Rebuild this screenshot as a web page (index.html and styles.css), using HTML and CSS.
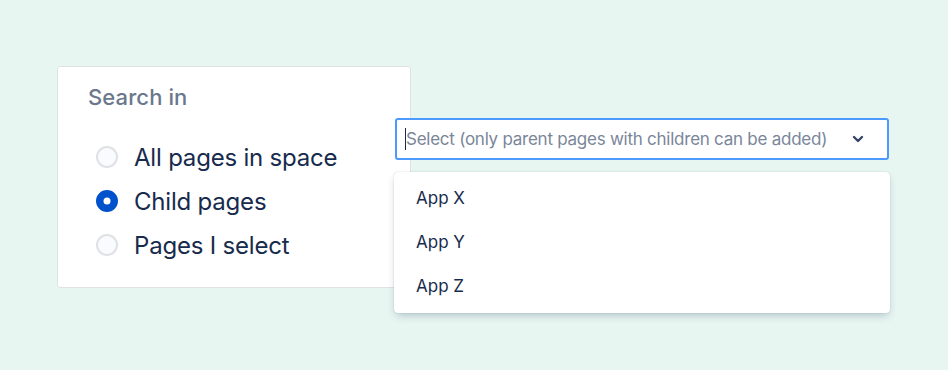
FILE: index.html
```html
<!DOCTYPE html>
<html lang="en">

<head>
    <meta charset="UTF-8" />
    <title>Search in</title>
    <link rel="stylesheet" href="styles.css">
</head>

<body>
    <div class="scene">
        <div class="card">
            <h3 class="card-title">Search in</h3>
            <label class="radio-option">
                <span class="radio"></span>
                <span>All pages in space</span>
            </label>
            <label class="radio-option">
                <span class="radio checked"></span>
                <span>Child pages</span>
            </label>
            <label class="radio-option">
                <span class="radio"></span>
                <span>Pages I select</span>
            </label>
        </div>

        <div class="picker">
            <div class="select">
                <span class="caret"></span>
                <span class="placeholder">Select (only parent pages with children can be added)</span>
                <svg class="chevron" width="14" height="14" viewBox="0 0 14 14">
                    <path d="M3 5l4 4 4-4" fill="none" stroke="#344563" stroke-width="2.4" stroke-linecap="round" stroke-linejoin="round" />
                </svg>
            </div>
            <ul class="menu">
                <li>App X</li>
                <li>App Y</li>
                <li>App Z</li>
            </ul>
        </div>
    </div>
</body>

</html>
```

FILE: styles.css
```css
/* base */

* {
    box-sizing: border-box;
    font-family: Inter, "Noto Sans", sans-serif;
}

body {
    margin: 0;
    background: #e8f6f2;
    height: 370px;
    overflow: hidden;
}

.scene {
    display: flex;
    align-items: flex-start;
    padding: 66px 0 0 57px;
}
/* left card */

.card {
    width: 354px;
    height: 222px;
    background: white;
    border: 1px solid #dfe3e6;
    border-radius: 3px;
    padding: 15px 0 0 30px;
}

.card-title {
    margin: 0 0 23px;
    font-size: 22px;
    font-weight: 500;
    color: #6b778c;
    line-height: 30px;
    letter-spacing: 0.1px;
}

.radio-option {
    display: flex;
    align-items: center;
    height: 44px;
    padding-left: 8px;
    font-size: 24px;
    color: #172b4d;
    letter-spacing: -0.2px;
}

.radio {
    width: 22px;
    height: 22px;
    border-radius: 50%;
    border: 2px solid #dfe1e6;
    background: #fafbfc;
    margin-right: 16px;
    position: relative;
}

.radio.checked {
    background: #0052cc;
    border-color: #0052cc;
}

.radio.checked::after {
    content: '';
    position: absolute;
    top: 50%;
    left: 50%;
    width: 7px;
    height: 7px;
    border-radius: 50%;
    background: white;
    transform: translate(-50%, -50%);
}
/* select + menu */

.picker {
    width: 496px;
    margin: 52px 0 0 -17px;
}

.select {
    display: flex;
    align-items: center;
    height: 42px;
    margin-left: 1px;
    width: 494px;
    background: white;
    border: 2px solid #4c9aff;
    border-radius: 3px;
    padding: 0 22px 0 8px;
}

.caret {
    width: 1px;
    height: 22px;
    background: #172b4d;
}

.placeholder {
    flex: 1;
    font-size: 17px;
    color: #7a869a;
    letter-spacing: -0.25px;
}

.menu {
    list-style: none;
    margin: 12px 0 0;
    padding: 4px 0;
    height: 141px;
    background: white;
    border-radius: 4px;
    box-shadow: 0 4px 8px -2px rgba(9, 30, 66, 0.25), 0 0 1px rgba(9, 30, 66, 0.31);
}

.menu li {
    height: 44px;
    line-height: 44px;
    padding-left: 22px;
    font-size: 17px;
    color: #172b4d;
}
```
